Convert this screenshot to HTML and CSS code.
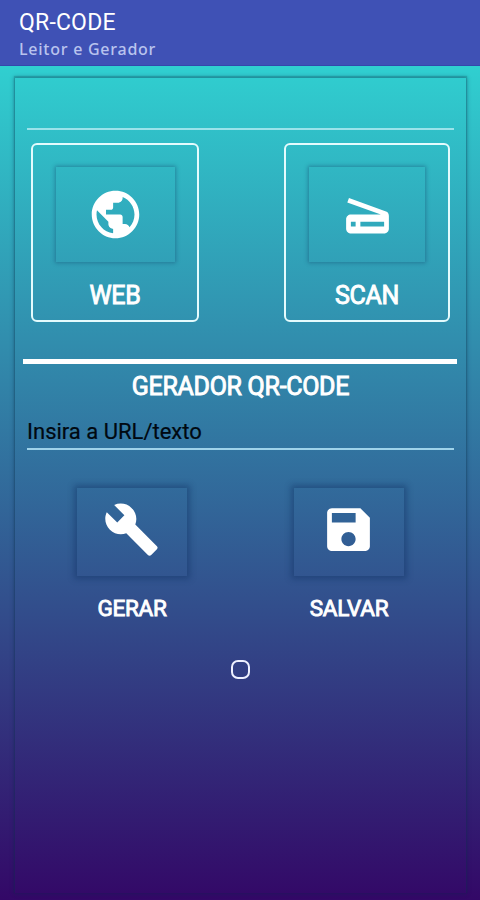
FILE: index.html
```
<!DOCTYPE html>
<html lang="pt-BR">
<head>
    <meta charset="UTF-8">
    <meta name="viewport" content="width=device-width, initial-scale=1.0">
    <title>QR-CODE</title>
    <link rel="stylesheet" href="styles.css">
</head>
<body>
    <header class="app-bar">
        <h1>QR-CODE</h1>
        <p>Leitor e Gerador</p>
    </header>

    <main class="panel">
        <div class="result-line"></div>

        <div class="card-row">
            <div class="card">
                <button class="icon-button" aria-label="Web">
                    <svg viewBox="0 0 24 24"><path d="M12 2C6.48 2 2 6.48 2 12s4.48 10 10 10 10-4.48 10-10S17.52 2 12 2zm-1 17.93c-3.95-.49-7-3.85-7-7.93 0-.62.08-1.21.21-1.79L9 15v1c0 1.1.9 2 2 2v1.93zm6.9-2.54c-.26-.81-1-1.39-1.9-1.39h-1v-3c0-.55-.45-1-1-1H8v-2h2c.55 0 1-.45 1-1V7h2c1.1 0 2-.9 2-2v-.41c2.93 1.19 5 4.06 5 7.41 0 2.08-.8 3.97-2.1 5.39z"/></svg>
                </button>
                <span class="card-label">WEB</span>
            </div>
            <div class="card card-scan">
                <button class="icon-button" aria-label="Scan">
                    <svg viewBox="0 0 24 24"><path d="M19.8 10.7L4.2 5l-.7 1.9L17.6 12H5c-1.1 0-2 .9-2 2v4c0 1.1.9 2 2 2h14c1.1 0 2-.9 2-2v-5.5c0-.8-.5-1.6-1.2-1.8zM7 17H5v-2h2v2zm12 0H9v-2h10v2z"/></svg>
                </button>
                <span class="card-label">SCAN</span>
            </div>
        </div>

        <div class="divider"></div>
        <h2>GERADOR QR-CODE</h2>
        <input type="text" class="url-input" placeholder="Insira a URL/texto">

        <div class="action-row">
            <div class="action">
                <button class="icon-button small" aria-label="Gerar">
                    <svg viewBox="0 0 24 24"><path d="M22.7 19l-9.1-9.1c.9-2.3.4-5-1.5-6.9-2-2-5-2.4-7.4-1.3L9 6 6 9 1.6 4.7C.4 7.1.9 10.1 2.9 12.1c1.9 1.9 4.6 2.4 6.9 1.5l9.1 9.1c.4.4 1 .4 1.4 0l2.3-2.3c.5-.4.5-1.1.1-1.4z"/></svg>
                </button>
                <span class="action-label">GERAR</span>
            </div>
            <div class="action">
                <button class="icon-button small" aria-label="Salvar">
                    <svg viewBox="0 0 24 24"><path d="M17 3H5c-1.11 0-2 .9-2 2v14c0 1.1.89 2 2 2h14c1.1 0 2-.9 2-2V7l-4-4zm-5 16c-1.66 0-3-1.34-3-3s1.34-3 3-3 3 1.34 3 3-1.34 3-3 3zm3-10H5V5h10v4z"/></svg>
                </button>
                <span class="action-label">SALVAR</span>
            </div>
        </div>

        <div class="qr-output"></div>
    </main>
</body>
</html>
```
FILE: styles.css
```
:root {
    --bar-color: #3f51b5;
    --gradient-top: #30cfd0;
    --gradient-bottom: #330867;
    --text-color: #ffffff;
    --shadow-color: rgba(10, 40, 75, 0.36);
}

* {
    box-sizing: border-box;
}

body {
    margin: 0;
    height: 900px;
    display: flex;
    flex-direction: column;
    font-family: Roboto, sans-serif;
    color: var(--text-color);
    background: linear-gradient(var(--gradient-top) 66px, var(--gradient-bottom) 900px);
    overflow: hidden;
}

.app-bar {
    height: 66px;
    flex-shrink: 0;
    padding: 10px 19px 0;
    background-color: var(--bar-color);
    border-bottom: 1px solid #3547ac;
}

h1 {
    margin: 0;
    font-size: 23px;
    line-height: 26px;
    font-weight: 400;
    letter-spacing: 0.2px;
}

.app-bar p {
    margin: 2px 0 0;
    font-family: "Noto Sans", sans-serif;
    font-size: 16px;
    line-height: 22px;
    font-weight: 500;
    letter-spacing: 0.75px;
    color: #b9c3ee;
}

.panel {
    flex-grow: 1;
    display: flex;
    flex-direction: column;
    margin: 12px 14px 7px 15px;
    padding: 50px 9px 0 8px;
    box-shadow: 0 0 4px 1px var(--shadow-color), 0 -1px 1px 1px rgba(10, 60, 75, 0.2);
}

.result-line {
    height: 2px;
    margin: 0 3px 0 4px;
    background-color: #9be3ea;
}

.card-row {
    display: flex;
    justify-content: space-between;
    margin: 13px 7px 0 8px;
}

.card {
    width: 168px;
    height: 179px;
    display: flex;
    flex-direction: column;
    align-items: center;
    padding-top: 22px;
    border: 2px solid #e4fbfd;
    border-radius: 6px;
}

.card-scan {
    width: 166px;
}

.icon-button {
    width: 119px;
    height: 95px;
    flex-shrink: 0;
    display: flex;
    align-items: center;
    justify-content: center;
    padding: 0 0 1px;
    border: none;
    background: none;
    box-shadow: 0 0 4px 1px rgba(20, 70, 110, 0.45);
}

.card-scan .icon-button {
    width: 116px;
}

.icon-button.small {
    width: 110px;
    height: 88px;
    padding: 0 0 6px;
    box-shadow: 0 0 6px 3px rgba(15, 45, 95, 0.42);
}

.icon-button svg {
    width: 57px;
    height: 57px;
    fill: currentColor;
    color: var(--text-color);
}

.card-label,
.action-label,
h2 {
    font-weight: 400;
    letter-spacing: -0.3px;
    -webkit-text-stroke: 0.9px currentColor;
}

.card-label {
    margin-top: 19px;
    font-size: 25px;
    line-height: 30px;
}

.divider {
    height: 5px;
    margin-top: 37px;
    background-color: #ffffff;
}

h2 {
    margin: 8px 0 0 1px;
    font-size: 25px;
    line-height: 30px;
    text-align: center;
}

.url-input {
    height: 34px;
    margin: 14px 3px 0 4px;
    padding: 0 0 2px;
    font-family: inherit;
    font-size: 22px;
    color: #000000;
    background: transparent;
    border: none;
    border-bottom: 2px solid #9fd3ea;
    outline: none;
}

.url-input::placeholder {
    color: #000810;
    -webkit-text-stroke: 0.2px #000810;
}

.action-row {
    display: flex;
    justify-content: center;
    gap: 107px;
    margin-top: 38px;
}

.action {
    width: 110px;
    display: flex;
    flex-direction: column;
    align-items: center;
}

.action-label {
    margin: 18px 0 0 1px;
    font-size: 22.5px;
    line-height: 28px;
}

.qr-output {
    width: 19px;
    height: 19px;
    margin: 38px auto 0;
    border: 2px solid #eef0ff;
    border-radius: 7px;
}
```
